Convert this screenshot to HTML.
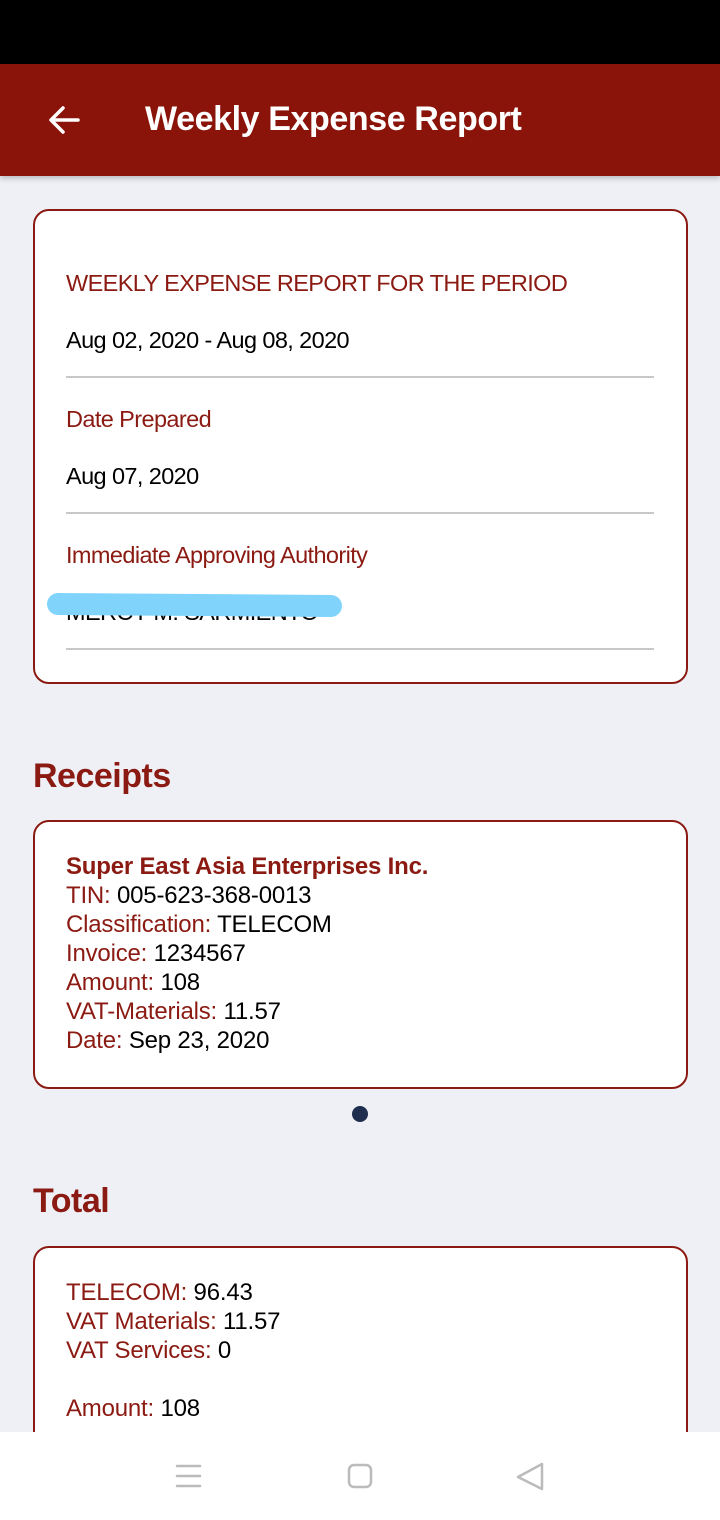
<!DOCTYPE html><html><head><style>
body{margin:0;width:720px;height:1520px;background:#eff0f6;font-family:"Liberation Sans",Roboto,sans-serif;position:relative;overflow:hidden}
.a{position:absolute}
.r{color:#8b1a12}
.card{position:absolute;left:33px;width:655px;border:2px solid #8b1a12;border-radius:16px;background:#fff;box-sizing:border-box}
.t{position:absolute;left:66px;font-size:23.5px;letter-spacing:-0.6px;white-space:nowrap}
.ln{position:absolute;left:66px;width:588px;height:2px;background:#c8c8c8}
.l{font-size:24px;letter-spacing:-0.2px;line-height:29px;white-space:nowrap}
</style></head><body>
<div class="a" style="left:0;top:0;width:720px;height:64px;background:#000"></div>
<div class="a" style="left:0;top:64px;width:720px;height:112px;background:#8b140a;box-shadow:0 2px 6px rgba(0,0,0,.25)"></div>
<svg class="a" style="left:46px;top:102px" width="36" height="36" viewBox="0 0 36 36"><path d="M32 18H6M17 6L5 18l12 12" stroke="#fff" stroke-width="3.5" fill="none" stroke-linecap="round" stroke-linejoin="round"/></svg>
<div class="a" style="left:145px;top:100px;color:#fff;font-size:34px;font-weight:bold;letter-spacing:-0.4px">Weekly Expense Report</div>
<div class="card" style="top:209px;height:475px"></div>
<div class="t r" style="top:270px">WEEKLY EXPENSE REPORT FOR THE PERIOD</div>
<div class="t" style="top:327px">Aug 02, 2020 - Aug 08, 2020</div>
<div class="ln" style="top:376px"></div>
<div class="t r" style="top:406px">Date Prepared</div>
<div class="t" style="top:463px">Aug 07, 2020</div>
<div class="ln" style="top:512px"></div>
<div class="t r" style="top:542px">Immediate Approving Authority</div>
<div class="t" style="top:599px;height:22px;overflow:hidden">MERCY M. SARMIENTO</div>
<div class="a" style="left:47px;top:594px;width:295px;height:22px;background:#80d4fb;border-radius:11px;transform:rotate(0.4deg)"></div>
<div class="ln" style="top:648px"></div>
<div class="a r" style="left:33px;top:757px;font-size:34px;font-weight:bold;letter-spacing:-0.5px">Receipts</div>
<div class="card" style="top:820px;height:269px"></div>
<div class="a" style="left:66px;top:852px">
<div class="l r" style="font-weight:bold">Super East Asia Enterprises Inc.</div>
<div class="l"><span class="r">TIN:</span> 005-623-368-0013</div>
<div class="l"><span class="r">Classification:</span> TELECOM</div>
<div class="l"><span class="r">Invoice:</span> 1234567</div>
<div class="l"><span class="r">Amount:</span> 108</div>
<div class="l"><span class="r">VAT-Materials:</span> 11.57</div>
<div class="l"><span class="r">Date:</span> Sep 23, 2020</div>
</div>
<div class="a" style="left:352px;top:1106px;width:16px;height:16px;border-radius:50%;background:#1f2d4e"></div>
<div class="a r" style="left:33px;top:1182px;font-size:34px;font-weight:bold;letter-spacing:-0.5px">Total</div>
<div class="card" style="top:1246px;height:260px"></div>
<div class="a" style="left:66px;top:1278px">
<div class="l"><span class="r">TELECOM:</span> 96.43</div>
<div class="l"><span class="r">VAT Materials:</span> 11.57</div>
<div class="l"><span class="r">VAT Services:</span> 0</div>
<div class="l">&nbsp;</div>
<div class="l"><span class="r">Amount:</span> 108</div>
</div>
<div class="a" style="left:0;top:1432px;width:720px;height:88px;background:#fff"></div>
<svg class="a" style="left:0;top:1440px" width="720" height="80"><g stroke="#bbb" stroke-width="2.5" fill="none" stroke-linecap="round" stroke-linejoin="round"><path d="M177 26h23M177 36h23M177 46h23"/><rect x="349" y="25" width="22" height="22" rx="5"/><path d="M542 24L518 37l24 12z"/></g></svg>
</body></html>
